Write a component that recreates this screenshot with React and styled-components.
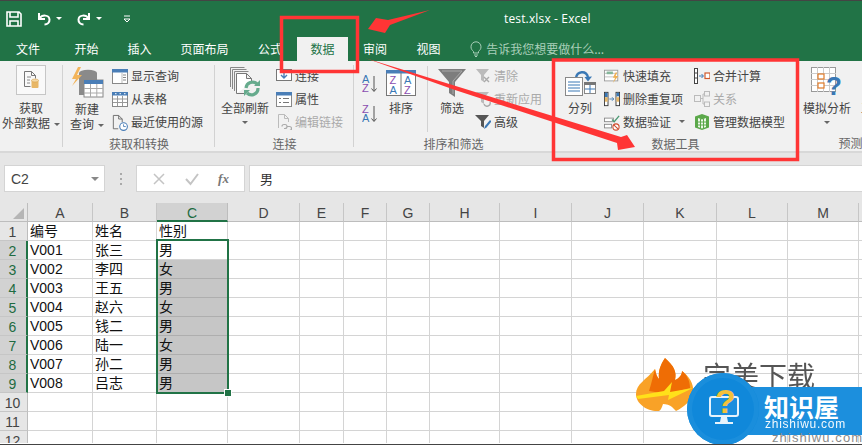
import React from "react";
import styled, { createGlobalStyle } from "styled-components";

const Global = createGlobalStyle`
  html, body { margin: 0; padding: 0; background: #fff; }
  * { box-sizing: border-box; }
`;
const CJK = `"Noto Sans CJK SC", "Liberation Sans", sans-serif`;

const Page = styled.div`
  position: relative; width: 862px; height: 445px; overflow: hidden; background: #fff;
  border-top: 1px solid #444; border-bottom: 1px solid #444;
  font-family: ${CJK}; font-size: 12px;
`;
const TitleBar = styled.div`
  height: 35px; background: #217346; display: flex; align-items: center; padding-left: 6px; color: #fff;
`;
const Qat = styled.div`display: flex; align-items: center; width: 498px;`;
const QatItem = styled.span`display: inline-flex; align-items: center; margin-left: ${p => p.$ml || 0}px;`;
const DocTitle = styled.div`font-family: "Open Sans", sans-serif; font-size: 12px; color: #fff; letter-spacing: .15px;`;
const TabBar = styled.div`
  height: 25px; background: #217346; display: flex; align-items: stretch; padding-top: 1px; color: #fff;
`;
const Tab = styled.div`
  padding: 0 ${p => p.$pad ?? 14.5}px 0 ${p => p.$padL ?? p.$pad ?? 14.5}px; line-height: 23px;
  ${p => p.$active && `background:#f1f1f1;color:#217346;`}
`;
const Tell = styled.div`display: flex; align-items: center; gap: 4px; margin-left: 15px; padding-bottom: 1px; color: #a9cfb9;`;
const Ribbon = styled.div`
  height: 92px; background: #f1f1f1; border-bottom: 2px solid #d8d8d8; display: flex; color: #444;
`;
const Group = styled.div`
  flex: 0 0 ${p => p.$w}px; display: flex; flex-direction: column; position: relative;
  &::after { content: ""; position: absolute; right: 0; top: 4px; bottom: 4px; width: 1px; background: #d2d2d2; }
`;
const GroupBody = styled.div`flex: 1; display: flex; align-items: flex-start; padding-top: 3px; padding-left: ${p => p.$pl || 0}px;`;
const Caption = styled.div`height: 19px; line-height: 21px; text-align: center; color: #666;`;
const Large = styled.div`
  flex: 0 0 ${p => p.$w}px; margin-left: ${p => p.$ml || 0}px; margin-top: ${p => p.$mt ?? 1}px;
  display: flex; flex-direction: column; align-items: center; line-height: 15px; white-space: nowrap;
`;
const LargeIcon = styled.div`height: ${p => p.$h || 35}px; display: flex; align-items: ${p => p.$align || "center"}; justify-content: center;`;
const BoxIcon = styled.div`
  width: 30px; height: 30px; background: #f9f9f9; border: 1px solid #c6c6c6; display: flex; align-items: center; justify-content: center;
`;
const Caret = styled.span`
  display: inline-block; width: 0; height: 0; border-left: ${p => p.$s || 3}px solid transparent; border-right: ${p => p.$s || 3}px solid transparent;
  border-top: ${p => p.$s || 3}px solid ${p => p.$c || "#666"}; margin-left: ${p => p.$ml ?? 4}px; vertical-align: 2px;
`;
const LargeCaret = styled(Caret)`margin: 6px 0 0;`;
const Stack = styled.div`display: flex; flex-direction: column; margin-left: ${p => p.$ml || 0}px;`;
const Small = styled.div`
  height: 23px; display: flex; align-items: center; gap: 3px; white-space: nowrap; color: ${p => p.$off ? "#aaa" : "#444"};
`;
const SortSlot = styled.div`height: ${p => p.$h}px; padding-top: ${p => p.$pt}px; display: flex; align-items: center;`;
const VSep = styled.div`flex: 0 0 1px; height: 66px; margin: 2px 0 0 ${p => p.$ml}px; background: #d2d2d2;`;
const SmallIcon = styled.span`width: 16px; height: 16px; display: inline-flex;`;
const Formula = styled.div`height: 50px; background: #e6e6e6; display: flex; padding: 12px 0 0 4px; align-items: flex-start;`;
const NameBox = styled.div`
  width: 101px; height: 27px; background: #fff; border: 1px solid #d4d4d4; display: flex; align-items: center;
  justify-content: space-between; padding: 0 5px 0 6px; font: 14px "Liberation Sans", sans-serif; color: #444;
`;
const Dots = styled.div`
  width: 31px; display: flex; flex-direction: column; align-items: center; gap: 3px; padding-top: 8px;
  & > i { width: 2px; height: 2px; background: #aaa; display: block; }
`;
const FxBox = styled.div`
  width: 109px; height: 27px; background: #fff; border: 1px solid #d4d4d4; display: flex; align-items: center; justify-content: space-around; padding: 0 6px;
`;
const Fx = styled.span`font: italic bold 13px "Liberation Serif", serif; color: #777;`;
const Input = styled.div`
  flex: 1; margin-left: 4px; height: 27px; background: #fff; border: 1px solid #d4d4d4; border-right: 0; padding-left: 10px; line-height: 25px; font-size: 13px; color: #333;
`;
const Sheet = styled.div`
  position: relative; height: 240px; overflow: hidden;
  display: grid; grid-template-columns: 28px 65px 64px 71px 72px 44px 43px 43px 70px 72px 72px 73px 71px 71px 20px; grid-auto-rows: 19px;
  background: #fff;
`;
const Corner = styled.div`
  background: #e6e6e6; border-right: 1px solid #bdbdbd; border-bottom: 1px solid #bdbdbd; position: relative;
  &::after { content: ""; position: absolute; right: 3px; bottom: 2px; border-left: 11px solid transparent; border-bottom: 11px solid #b5b5b5; }
`;
const ColHead = styled.div`
  background: ${p => p.$sel ? "#d2d2d2" : "#e6e6e6"}; color: ${p => p.$sel ? "#1e6b41" : "#444"};
  border-right: 1px solid ${p => p.$sel ? "#bdbdbd" : "#c6c6c6"};
  border-bottom: ${p => p.$sel ? "2px solid #217346" : "1px solid #bdbdbd"};
  text-align: center; font: 14px/20px "Liberation Sans", sans-serif;
`;
const RowHead = styled.div`
  background: ${p => p.$sel ? "#d2d2d2" : "#e6e6e6"}; color: ${p => p.$sel ? "#1e6b41" : "#444"};
  border-right: ${p => p.$sel ? "2px solid #217346" : "1px solid #bdbdbd"};
  border-bottom: 1px solid #c6c6c6; text-align: center; font: 14px/20px "Liberation Sans", sans-serif;
  padding-right: ${p => p.$sel ? 1 : 2}px; overflow: hidden;
`;
const Cell = styled.div`
  background: ${p => p.$fill ? "#c6c6c6" : "#fff"}; border-right: 1px solid #d4d4d4;
  border-bottom: 1px solid ${p => p.$fill ? "#aeaeae" : "#d4d4d4"};
  padding-left: 2px; font: 14px/19px "Liberation Sans", "Noto Sans CJK SC", sans-serif; color: #111; white-space: nowrap; overflow: hidden;
`;
const Selection = styled.div`
  position: absolute; left: 156px; top: 36px; width: 73px; height: 155px; border: 2px solid #217346; pointer-events: none;
  &::after { content: ""; position: absolute; right: -5px; bottom: -5px; width: 6px; height: 6px; background: #217346; border: 1px solid #fff; }
`;
const Overlay = styled.svg`position: absolute; left: 0; top: -1px; pointer-events: none;`;
const Mark = styled.div`position: absolute; left: 632px; top: 352px; width: 230px; height: 92px; overflow: hidden; pointer-events: none;`;
const MarkTitle = styled.div`
  position: absolute; left: 71px; top: 4px; font-size: 28px; line-height: 36px; color: #555; filter: blur(.5px); white-space: nowrap;
`;
const MarkLogo = styled.svg`position: absolute; left: 2px; top: 1px; filter: blur(.4px);`;
const MarkGhost = styled.div`
  position: absolute; left: 140px; top: 77px; font: 13px/16px "Liberation Sans", sans-serif; letter-spacing: 1.1px; color: #8a8a8a; white-space: nowrap;
`;
const BadgeBar = styled.div`position: absolute; left: 90px; top: 34px; width: 150px; height: 48px; background: #1c8fdd; border-radius: 10px;`;
const BadgeDot = styled.div`position: absolute; left: 55px; top: 20px; width: 72px; height: 72px; border-radius: 50%; background: #1088da; box-shadow: inset 0 0 0 5px #1a8edc;`;
const BadgeName = styled.div`
  position: absolute; left: 132px; top: 38px; color: #fff; font-size: 25px; font-weight: 700; line-height: 30px; white-space: nowrap;
`;
const BadgeSub = styled.div`
  position: absolute; left: 133px; top: 65px; color: #fff; font: 12px/12px "Liberation Sans", sans-serif; letter-spacing: .75px; white-space: nowrap; opacity: .95;
`;
const BadgeIcon = styled.svg`position: absolute; left: 71px; top: 33px;`;

const S = ({ w = 16, h = 16, children }) => <svg width={w} height={h} viewBox={`0 0 ${w} ${h}`} fill="none">{children}</svg>;

const Save = () => <S w={16} h={16}><path d="M1 1h12l2 2v12H1z M4 1v5h8V1 M4 15v-5h8v5" stroke="#fff" strokeWidth="1.6" /></S>;
const Undo = () => <S w={16} h={16}><path d="M3 2v6h6 M3.5 7.5C6 3.5 13 3.5 13.5 8.5c.2 3-2 5-5 5" stroke="#fff" strokeWidth="2" /></S>;
const Redo = () => <S w={16} h={16}><path d="M13 2v6H7 M12.5 7.5C10 3.5 3 3.5 2.5 8.5c-.2 3 2 5 5 5" stroke="#fff" strokeWidth="2" /></S>;
const Customize = () => <S w={8} h={8}><path d="M1 1h6 M1 4h6L4 7z" stroke="#fff" /></S>;
const Bulb = () => <S w={12} h={16}><path d="M3.5 10.5C2 9 1 8 1 5.800a5 5 0 0 1 10 0c0 2.200-1 3.200-2.500 4.700v1.500h-5z M4 14h4 M5 15.500h2" stroke="#a9cfb9" /></S>;

const GetData = () => <S w={18} h={20}><path d="M2.500 1.500h7l4 4v3 M2.500 1.500v15h6 M9.500 1.500v4h4" stroke="#777" /><path d="M5 7h4M5 10h3M5 13h3" stroke="#888" /><rect x="9.500" y="10" width="7" height="8" rx="1" fill="#e8b766" /><ellipse cx="13" cy="10.500" rx="3.500" ry="1.500" fill="#f4d9a6" stroke="#d9a24d" strokeWidth=".6" /></S>;
const NewQuery = () => <S w={33} h={33}>
  <ellipse cx="17" cy="6" rx="9" ry="3.200" fill="#8a8a8a" /><rect x="8" y="6" width="18" height="22" fill="#8a8a8a" />
  <path d="M7 0 1 12h4L1 19 11 8H6l4-8z" fill="#f2b45a" />
  <rect x="13" y="13" width="19" height="17" fill="#fff" stroke="#888" /><rect x="13" y="13" width="19" height="4" fill="#4a7eb7" />
  <path d="M19.500 17v13M25.800 17v13M13 21.500h19M13 26h19" stroke="#aaa" />
</S>;
const ShowQuery = () => <S><rect x=".5" y="1.500" width="15" height="14" fill="#fff" stroke="#888" /><rect y="1" width="16" height="3.500" fill="#4a7eb7" /><path d="M11 7h3M11 9.500h3M11 12h3" stroke="#888" /><path d="M10 5v10" stroke="#bbb" /></S>;
const FromTable = () => <S><rect x=".5" y="1.500" width="15" height="14" fill="#fff" stroke="#888" /><rect y="1" width="16" height="3.500" fill="#4a7eb7" /><path d="M5.500 5v10M10.500 5v10M1 8h14M1 11.500h14" stroke="#999" /><path d="M3 2.700h1.500M7.500 2.700H9M12 2.700h1.500" stroke="#fff" /></S>;
const Recent = () => <S w={18} h={18}><path d="M1.500 15.500V.5h6l4 4V8 M7.500.5v4h4 M1.500 15.500H7" stroke="#666" /><circle cx="13" cy="13" r="4.300" fill="#fff" stroke="#4a7eb7" strokeWidth="1.200" /><path d="M13 10.500V13h2.500" stroke="#4a7eb7" /></S>;
const Refresh = () => <S w={30} h={32}>
  <path d="M.5 20V.5h14 M2.500 22V2.500h14 M4.500 24V4.500h14" stroke="#888" /><path d="M6.500 26.500v-20h10l5 5V16 M16.500 6.500v5h5 M6.500 26.500H14" fill="#fff" stroke="#777" />
  <path d="M16 21a6.500 6.500 0 0 1 11-4M28 21a6.500 6.500 0 0 1-11 5" stroke="#66ab8d" strokeWidth="3.200" /><path d="M24 19h6v-6zM20 23h-6v6z" fill="#66ab8d" />
</S>;
const Connect = () => <S><rect x=".5" y="1.500" width="15" height="11" fill="#fff" stroke="#777" /><path d="M8 4v6M5 7l3 3 3-3" stroke="#4a7eb7" strokeWidth="1.400" /></S>;
const Props = () => <S><rect x=".5" y="1.500" width="15" height="14" fill="#fff" stroke="#888" /><rect y="1" width="16" height="3.500" fill="#4a7eb7" /><path d="M3 7.500h2M3 11.500h2M7 7.500h6M7 11.500h6" stroke="#777" strokeWidth="1.200" /></S>;
const EditLinks = () => <S><path d="M2.500 14V.5h6l4 4V8 M8.500.5v4h4" stroke="#bbb" /><path d="M6 12.500a2 2 0 0 1 2-2h1a2 2 0 0 1 0 4H8 M11 12.500h2.500a2 2 0 0 1 0 4" stroke="#aaa" strokeWidth="1.200" /></S>;
const Letter = ({ x, y, c, s = 11, ch }) => <text x={x} y={y} fill={c} fontFamily="Liberation Sans" fontSize={s}>{ch}</text>;
const SortMini = ({ a, b, ca, cb }) => <S w={16} h={19}><Letter x={0} y={9} c={ca} ch={a} /><Letter x={0} y={18} c={cb} ch={b} /><path d="M12 2v15M9.500 14.500l2.500 3 2.500-3" stroke="#555" /></S>;
const Sort = () => <S w={30} h={26}>
  <rect x=".5" y=".5" width="29" height="25" fill="#fff" stroke="#777" /><rect width="30" height="3.500" fill="#4a7eb7" /><path d="M15 3v23" stroke="#777" />
  <Letter x={3.500} y={13.500} c="#8a4eb0" s={11} ch="Z" /><Letter x={3.500} y={24} c="#3a78b5" s={11} ch="A" /><Letter x={18} y={13.500} c="#3a78b5" s={11} ch="A" /><Letter x={18} y={24} c="#8a4eb0" s={11} ch="Z" />
</S>;
const Funnel = () => <S w={28} h={28}><path d="M0 0h28L17 13v15l-6-4V13z" fill="#7d7d7d" /><path d="M4 2h20l-9 10v13" stroke="#a8a8a8" /></S>;
const Clear = () => <S><path d="M1 1h13L9 7v7L6 12V7z" fill="#bbb" /><path d="M9 9l5 5M14 9l-5 5" stroke="#aaa" strokeWidth="1.400" /></S>;
const Reapply = () => <S><path d="M1 1h13L9 7v6L6 11V7z" fill="#bbb" /><path d="M9 13a3 3 0 0 0 6-2" stroke="#aaa" strokeWidth="1.400" /></S>;
const Advanced = () => <S><path d="M0 1h14L9 7v7L6 12V7z" fill="#555" /><path d="M9 15l1-3 5-6 1.500 1.500-5 6z" fill="#3a78b5" /></S>;
const Split = () => <S w={31} h={26}>
  <path d="M11 8c1-7 10-8 12-1" stroke="#3a78b5" strokeWidth="2.400" /><path d="M19.500 7l3.500 4.500 4-5z" fill="#3a78b5" />
  <rect x=".5" y="7.500" width="17" height="18" fill="#fff" stroke="#888" /><path d="M3 12h12M3 15h12M3 18h12M3 21h12" stroke="#3a78b5" />
  <rect x="19.500" y="12.500" width="11" height="11" fill="#fff" stroke="#888" /><rect x="19" y="12" width="12" height="3" fill="#777" /><path d="M25 15v8M20 19h10" stroke="#3a78b5" />
</S>;
const Flash = () => <S w={18} h={16}><rect x=".5" y="1.500" width="15" height="12" fill="#fff" stroke="#999" /><path d="M1 5h14M1 9h14" stroke="#bbb" /><rect x="3" y="3" width="7" height="3" fill="#86b79c" /><path d="M13 4l-3 6h2.500L10 16l6-8h-3l2-4z" fill="#f0b050" /></S>;
const RemoveDup = () => <S w={18} h={16}><rect x=".5" y=".5" width="4" height="15" fill="#fff" stroke="#333" /><rect x="13.500" y=".5" width="4" height="15" fill="#fff" stroke="#333" /><rect x="1" y="1" width="3" height="5" fill="#3a78b5" /><rect x="1" y="6" width="3" height="5" fill="#e8b766" /><rect x="14" y="1" width="3" height="4" fill="#3a78b5" /><rect x="14" y="6" width="3" height="5" fill="#e8b766" /><path d="M6 8h5M9 6l2 2-2 2" stroke="#3a78b5" /></S>;
const Validate = () => <S w={18} h={18}><rect x=".5" y="3.500" width="10" height="4" fill="#fff" stroke="#888" /><rect x=".5" y="10.500" width="8" height="4" fill="#fff" stroke="#888" /><path d="M9 5l2.500 2.500L17 1" stroke="#4c9a74" strokeWidth="1.500" /><circle cx="13.500" cy="13.500" r="3.500" fill="#fff" stroke="#d04a2a" strokeWidth="1.200" /><path d="M11 11l5 5" stroke="#d04a2a" strokeWidth="1.200" /></S>;
const Consolidate = () => <S><rect x=".5" y=".5" width="3" height="15" fill="#fff" stroke="#444" /><path d="M1 5h2M1 10h2" stroke="#444" /><path d="M5 8h4M7.500 6l2 2-2 2" stroke="#3a78b5" /><rect x="11" y="5" width="5" height="5.500" fill="#fff" stroke="#d0592c" strokeWidth="1.200" /></S>;
const Relations = () => <S><rect x=".5" y="4.500" width="6" height="6" stroke="#bbb" /><rect x="10.500" y=".5" width="5" height="4.500" stroke="#bbb" /><rect x="10.500" y="11" width="5" height="4.500" stroke="#bbb" /><path d="M6.500 7.500H9M9 3v10h1.500M9 3h1.500" stroke="#bbb" /></S>;
const DataModel = () => <S w={16} h={16}><path d="M8 0l7 2.500v11L8 16l-7-2.500v-11z" fill="#5ba84a" /><path d="M4 4l4 1.500L12 4v9l-4 1.500L4 13z" fill="#eef7ea" /><path d="M6.500 5v9M9.500 5v9M4 8h8M4 11h8" stroke="#5ba84a" /></S>;
const WhatIf = () => <S w={32} h={31}>
  <rect x=".5" y=".5" width="24" height="24" fill="#fff" stroke="#999" /><path d="M6.500 0v25M12.500 0v25M18.500 0v25M0 6.500h25M0 12.500h25M0 18.500h25" stroke="#ccc" />
  <rect x="7" y="7" width="6" height="5" fill="#fff" stroke="#e07b28" strokeWidth="1.200" /><rect x="7" y="16" width="6" height="5" fill="#fff" stroke="#e07b28" strokeWidth="1.200" />
  <text x="15" y="28" fill="#3a78b5" fontFamily="Liberation Sans" fontSize="26" fontWeight="700">?</text>
</S>;
const Forecast = () => <S w={28} h={26}><rect x=".5" y=".5" width="27" height="24" fill="#fff" stroke="#888" /></S>;

const Cross = () => <S w={14} h={14}><path d="M2 2l10 10M12 2 2 12" stroke="#c4c4c4" strokeWidth="1.500" /></S>;
const Check = () => <S w={16} h={14}><path d="M2 7l4.500 5L14 2" stroke="#c4c4c4" strokeWidth="2" /></S>;

const cols = ["A", "B", "C", "D", "E", "F", "G", "H", "I", "J", "K", "L", "M", "N"];
const data = [
  ["编号", "姓名", "性别"], ["V001", "张三", "男"], ["V002", "李四", "女"], ["V003", "王五", "男"], ["V004", "赵六", "女"],
  ["V005", "钱二", "男"], ["V006", "陆一", "女"], ["V007", "孙二", "男"], ["V008", "吕志", "男"], [], [], [],
];

const Btn = ({ icon, off, children }) => <Small $off={off}><SmallIcon>{icon}</SmallIcon>{children}</Small>;

export default function App() {
  return (
    <Page>
      <Global />
      <TitleBar>
        <Qat>
          <QatItem><Save /></QatItem>
          <QatItem $ml={14}><Undo /><Caret $c="#fff" $ml={4} /></QatItem>
          <QatItem $ml={14}><Redo /><Caret $c="#fff" $ml={4} /></QatItem>
          <QatItem $ml={21}><Customize /></QatItem>
        </Qat>
        <DocTitle>test.xlsx - Excel</DocTitle>
      </TitleBar>
      <TabBar>
        <Tab $padL={16} $pad={20}>文件</Tab>
        <Tab>开始</Tab><Tab>插入</Tab><Tab>页面布局</Tab><Tab $pad={15}>公式</Tab>
        <Tab $active $pad={13.5}>数据</Tab>
        <Tab $pad={15}>审阅</Tab><Tab>视图</Tab>
        <Tell><Bulb />告诉我您想要做什么...</Tell>
      </TabBar>
      <Ribbon>
        <Group $w={63}>
          <GroupBody>
            <Large $w={62} $mt={1}>
              <LargeIcon $align="flex-start"><BoxIcon><GetData /></BoxIcon></LargeIcon>
              <span>获取</span><span>外部数据<Caret /></span>
            </Large>
          </GroupBody>
          <Caption />
        </Group>
        <Group $w={152}>
          <GroupBody $pl={5}>
            <Large $w={38} $mt={2}>
              <LargeIcon><NewQuery /></LargeIcon>
              <span>新建</span><span>查询<Caret /></span>
            </Large>
            <Stack $ml={6}>
              <Btn icon={<ShowQuery />}>显示查询</Btn>
              <Btn icon={<FromTable />}>从表格</Btn>
              <Btn icon={<Recent />}>最近使用的源</Btn>
            </Stack>
          </GroupBody>
          <Caption>获取和转换</Caption>
        </Group>
        <Group $w={139}>
          <GroupBody $pl={3}>
            <Large $w={54}>
              <LargeIcon><Refresh /></LargeIcon>
              <span>全部刷新</span><LargeCaret />
            </Large>
            <Stack $ml={4}>
              <Btn icon={<Connect />}>连接</Btn>
              <Btn icon={<Props />}>属性</Btn>
              <Btn icon={<EditLinks />} off>编辑链接</Btn>
            </Stack>
          </GroupBody>
          <Caption>连接</Caption>
        </Group>
        <Group $w={199}>
          <GroupBody $pl={8}>
            <Stack>
              <SortSlot $h={34} $pt={4}><SortMini a="A" b="Z" ca="#3a78b5" cb="#8a4eb0" /></SortSlot>
              <SortSlot $h={30} $pt={0}><SortMini a="Z" b="A" ca="#8a4eb0" cb="#3a78b5" /></SortSlot>
            </Stack>
            <Large $w={36} $ml={5}>
              <LargeIcon><Sort /></LargeIcon>
              <span>排序</span>
            </Large>
            <VSep $ml={8} />
            <Large $w={36} $ml={6}>
              <LargeIcon><Funnel /></LargeIcon>
              <span>筛选</span>
            </Large>
            <Stack $ml={5}>
              <Btn icon={<Clear />} off>清除</Btn>
              <Btn icon={<Reapply />} off>重新应用</Btn>
              <Btn icon={<Advanced />}>高级</Btn>
            </Stack>
          </GroupBody>
          <Caption>排序和筛选</Caption>
        </Group>
        <Group $w={245}>
          <GroupBody $pl={10}>
            <Large $w={34}>
              <LargeIcon><Split /></LargeIcon>
              <span>分列</span>
            </Large>
            <Stack $ml={7}>
              <Btn icon={<Flash />}>快速填充</Btn>
              <Btn icon={<RemoveDup />}>删除重复项</Btn>
              <Btn icon={<Validate />}>数据验证<Caret $ml={5} /></Btn>
            </Stack>
            <Stack $ml={9}>
              <Btn icon={<Consolidate />}>合并计算</Btn>
              <Btn icon={<Relations />} off>关系</Btn>
              <Btn icon={<DataModel />}>管理数据模型</Btn>
            </Stack>
          </GroupBody>
          <Caption>数据工具</Caption>
        </Group>
        <Group $w={100}>
          <GroupBody $pl={3}>
            <Large $w={52}>
              <LargeIcon><WhatIf /></LargeIcon>
              <span>模拟分析</span><LargeCaret />
            </Large>
            <Large $w={48} $ml={2}>
              <LargeIcon><Forecast /></LargeIcon>
              <span>工作表</span>
            </Large>
          </GroupBody>
          <Caption>预测</Caption>
        </Group>
      </Ribbon>
      <Formula>
        <NameBox>C2<Caret $ml={0} $c="#888" $s={4} /></NameBox>
        <Dots><i /><i /><i /></Dots>
        <FxBox><Cross /><Check /><Fx>fx</Fx></FxBox>
        <Input>男</Input>
      </Formula>
      <Sheet>
        <Corner />
        {cols.map(c => <ColHead key={c} $sel={c === "C"}>{c}</ColHead>)}
        {data.map((row, r) => (
          <React.Fragment key={r}>
            <RowHead $sel={r >= 1 && r <= 8}>{r + 1}</RowHead>
            {cols.map((c, i) => <Cell key={c} $fill={i === 2 && r >= 2 && r <= 8}>{row[i] || ""}</Cell>)}
          </React.Fragment>
        ))}
        <Selection />
      </Sheet>
      <Mark>
        <MarkLogo width="62" height="60" viewBox="0 0 62 60">
          <path d="M31 4C40 12 43 18 41 26C46 24 48 20 48 17C55 22 60 30 59 37C58 47 50 53 42 57L38 53C36 51 32 50 29 50C28 53 27 56 25 57C14 58 2 50 2 40C2 30 12 26 21 15C22 20 23 23 25 25C24 16 27 10 31 4Z" fill="#f9a227" />
          <path d="M31 4C40 12 43 18 41 26C46 24 48 20 48 17C53 21 56 27 56 34L33 40L15 37C17 31 19 22 21 15C22 20 23 23 25 25C24 16 27 10 31 4Z" fill="#ef6d05" />
          <path d="M2 42 30 37 38 28 36 38 59 34 34 46 35 41 4 45Z" fill="#ffe11a" />
        </MarkLogo>
        <MarkTitle>完美下载</MarkTitle>
        <BadgeBar />
        <BadgeDot />
        <BadgeIcon width="44" height="54" viewBox="0 0 44 54">
          <rect x="7" y="11" width="28" height="19" rx="2" fill="#1a8ede" stroke="#e6f3fc" strokeWidth="2" />
          <path d="M18 31h6l1 5h5v2H12v-2h5z" fill="#e6f3fc" />
          <text x="12" y="27" fill="#f3c13a" fontFamily="Liberation Sans" fontSize="34" fontWeight="700">?</text>
        </BadgeIcon>
        <BadgeName>知识屋</BadgeName>
        <BadgeSub>zhishiwu.com</BadgeSub>
        <MarkGhost>zhishiwu.com</MarkGhost>
      </Mark>
      <Overlay width="862" height="445" viewBox="0 0 862 445">
        <rect x="281.500" y="17.500" width="76" height="54" fill="none" stroke="#ff3535" strokeWidth="3.500" />
        <rect x="553.500" y="60" width="244" height="99.500" fill="none" stroke="#ff3535" strokeWidth="3.500" />
        <path d="M430 10 388 20 376 18 368 29 385 33 390 25z" fill="#ff3535" />
        <path d="M365 58 621 137 627 135 635 147 618 150 617 143 455 90z" fill="#ff3535" />
      </Overlay>
    </Page>
  );
}
